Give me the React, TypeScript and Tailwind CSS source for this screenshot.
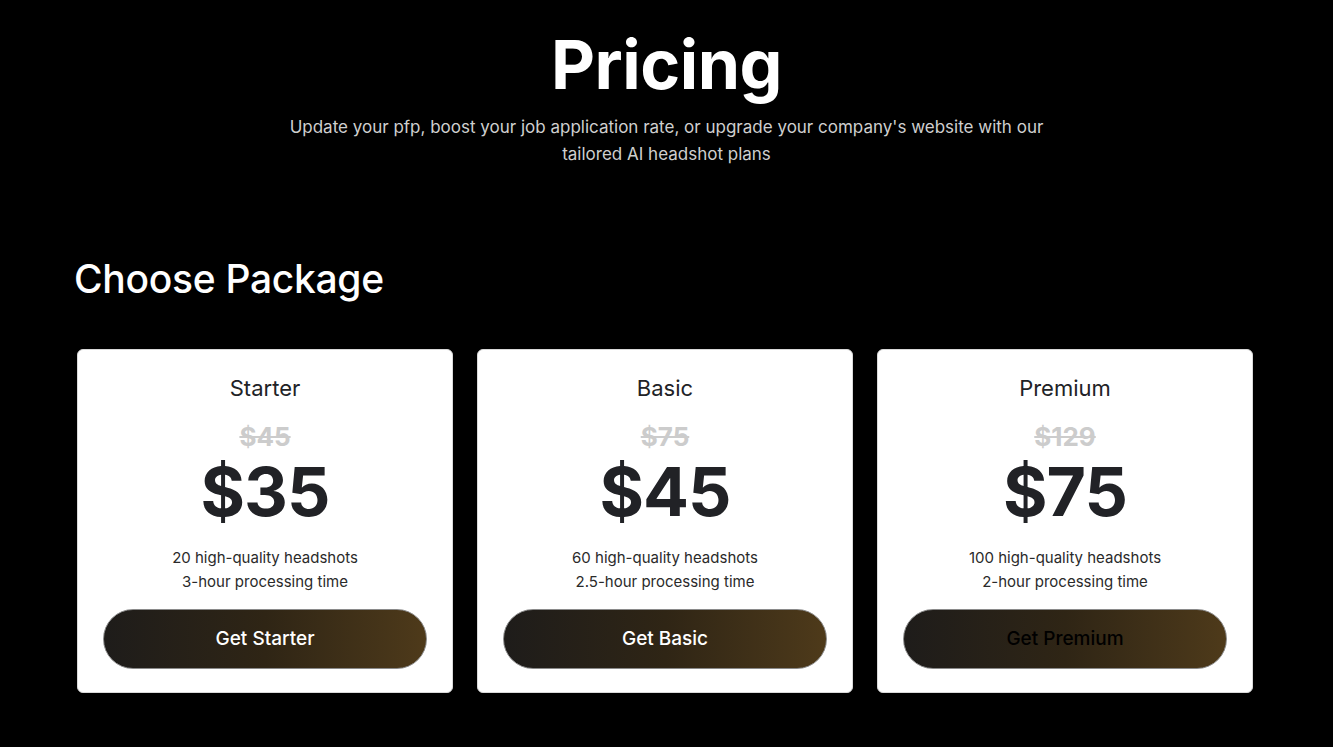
import React from "react";

const plans = [
  { name: "Starter", old: "$45", price: "$35", shots: "20 high-quality headshots", time: "3-hour processing time", cta: "Get Starter", dark: false },
  { name: "Basic", old: "$75", price: "$45", shots: "60 high-quality headshots", time: "2.5-hour processing time", cta: "Get Basic", dark: false },
  { name: "Premium", old: "$129", price: "$75", shots: "100 high-quality headshots", time: "2-hour processing time", cta: "Get Premium", dark: true },
];

export default function App() {
  return (
    <div className="min-h-[747px] w-full bg-black text-white" style={{ fontFamily: "Inter, 'Noto Sans', sans-serif" }}>
      <div className="flex flex-col items-center pt-[22px]">
        <h1 className="text-[68px] font-bold leading-[84px] tracking-[-0.5px]">Pricing</h1>
        <p className="mt-[8px] w-[762px] text-center text-[17px] leading-[27px] text-[#cfcfcf]">
          Update your pfp, boost your job application rate, or upgrade your company's website with our tailored AI headshot plans
        </p>
      </div>
      <div className="px-[77px] pt-[88px]">
        <h2 className="ml-[-3px] text-[39px] font-medium leading-[46px] tracking-[-0.3px]">Choose Package</h2>
        <div className="mt-[47px] grid grid-cols-3 gap-[24px] w-[1176px]">
          {plans.map((p) => (
            <div key={p.name} className="flex h-[344px] flex-col items-center rounded-[6px] border border-[#d9d9d9] bg-white px-[25px] pt-[23px] text-[#212226]">
              <div className="text-[22px] leading-[30px]">{p.name}</div>
              <div className="mt-[18px] text-[26px] font-bold leading-[32px] text-[#cccccc] line-through">{p.old}</div>
              <div className="mt-[4px] text-[68px] font-bold leading-[68px] tracking-[-1px]">{p.price}</div>
              <div className="mt-[21px] text-center text-[15px] leading-[24px] text-[#2a2a2a]">
                <div>{p.shots}</div>
                <div>{p.time}</div>
              </div>
              <button
                className={`mt-[15px] flex h-[60px] w-full items-center justify-center rounded-full border border-[#8a8a8a] bg-gradient-to-r from-[#1e1c1a] via-[#2f2515] to-[#4e3a1a] text-[19px] font-medium ${p.dark ? "text-black" : "text-white"}`}
              >
                {p.cta}
              </button>
            </div>
          ))}
        </div>
      </div>
    </div>
  );
}
